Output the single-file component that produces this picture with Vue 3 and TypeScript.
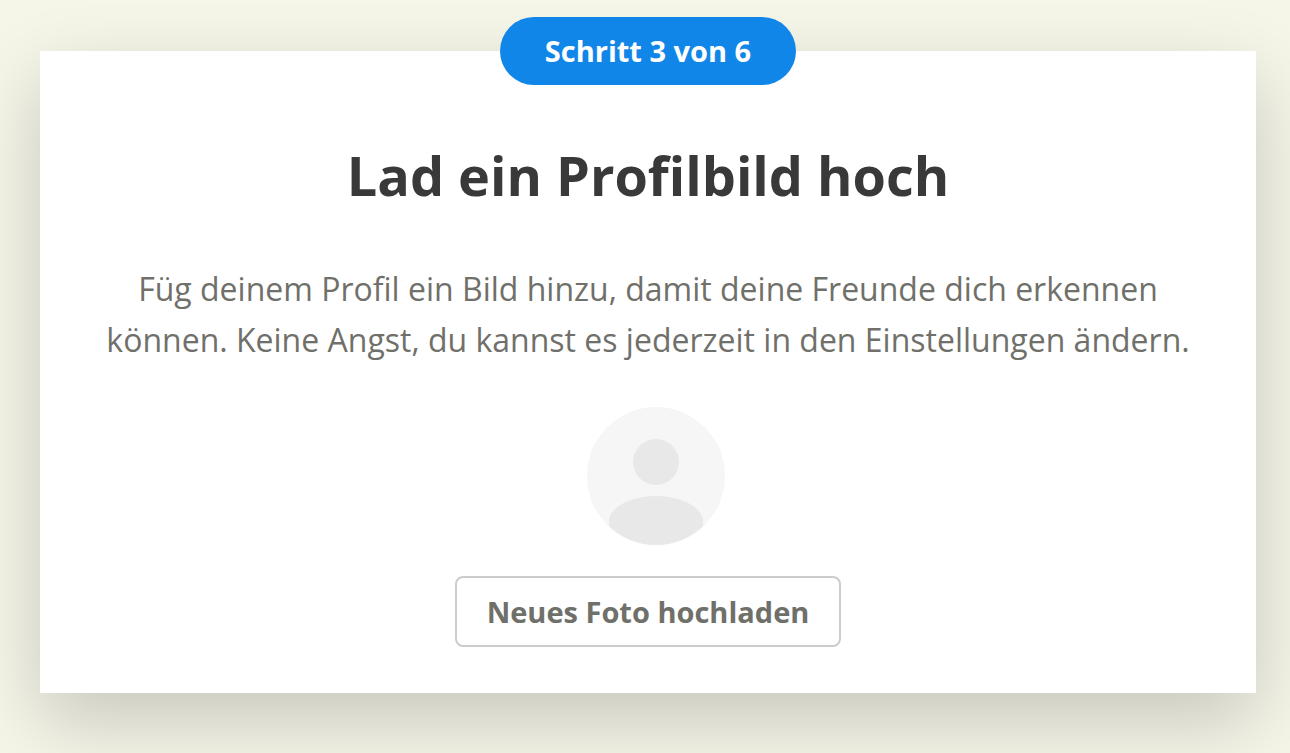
<script setup lang="ts">
import { ref } from 'vue'

const step = 3
const totalSteps = 6
const fileInput = ref<HTMLInputElement | null>(null)

function openPicker(): void {
  fileInput.value?.click()
}
</script>

<template>
  <main class="page">
    <section class="card" aria-labelledby="card-title">
      <p class="badge">Schritt {{ step }} von {{ totalSteps }}</p>
      <h1 id="card-title" class="title">Lad ein Profilbild hoch</h1>
      <p class="intro">
        Füg deinem Profil ein Bild hinzu, damit deine Freunde dich erkennen
        können. Keine Angst, du kannst es jederzeit in den Einstellungen ändern.
      </p>
      <svg class="avatar" viewBox="0 0 138 138" aria-hidden="true">
        <defs>
          <clipPath id="avatar-clip"><circle cx="69" cy="69" r="69" /></clipPath>
        </defs>
        <g clip-path="url(#avatar-clip)">
          <rect width="138" height="138" fill="#f6f6f6" />
          <circle cx="69" cy="55" r="23" fill="#e8e8e8" />
          <path d="M22 138V113C24 99 45 89 69 89S114 99 116 113V138Z" fill="#e8e8e8" />
        </g>
      </svg>
      <button class="upload" type="button" @click="openPicker">Neues Foto hochladen</button>
      <input ref="fileInput" type="file" accept="image/*" aria-label="Neues Foto hochladen" hidden />
    </section>
  </main>
</template>

<style>
body {
  margin: 0;
  background: #f5f5e8;
}
</style>

<style scoped>
.page {
  box-sizing: border-box;
  min-height: 100vh;
  padding: 51px 34px 60px 40px;
  overflow: hidden;
  font-family: "Open Sans", "Noto Sans", sans-serif;
  font-variant-ligatures: none;
}

.card {
  display: flex;
  flex-direction: column;
  align-items: center;
  box-sizing: border-box;
  padding: 0 60px 46px;
  background: #fff;
  box-shadow: 0 28px 72px rgba(0, 0, 0, 0.19);
  text-align: center;
}

.badge {
  margin: -34px 0 0;
  padding: 0 45px;
  border-radius: 34px;
  background: #1186e9;
  color: #fff;
  font-size: 29px;
  font-weight: 700;
  line-height: 68px;
}

.title {
  margin: 52px 0 0;
  color: #393939;
  font-size: 54px;
  font-weight: 700;
  line-height: 76px;
}

.intro {
  margin: 50px 0 0;
  color: #70706a;
  font-size: 32px;
  line-height: 51px;
}

.avatar {
  width: 138px;
  height: 138px;
  margin: 42px 0 0 15px;
}

.upload {
  height: 71px;
  margin-top: 31px;
  padding: 0 30px;
  border: 2px solid #ccc;
  border-radius: 8px;
  background: #fff;
  color: #70706a;
  font: inherit;
  font-size: 29px;
  font-weight: 700;
  cursor: pointer;
}
</style>
